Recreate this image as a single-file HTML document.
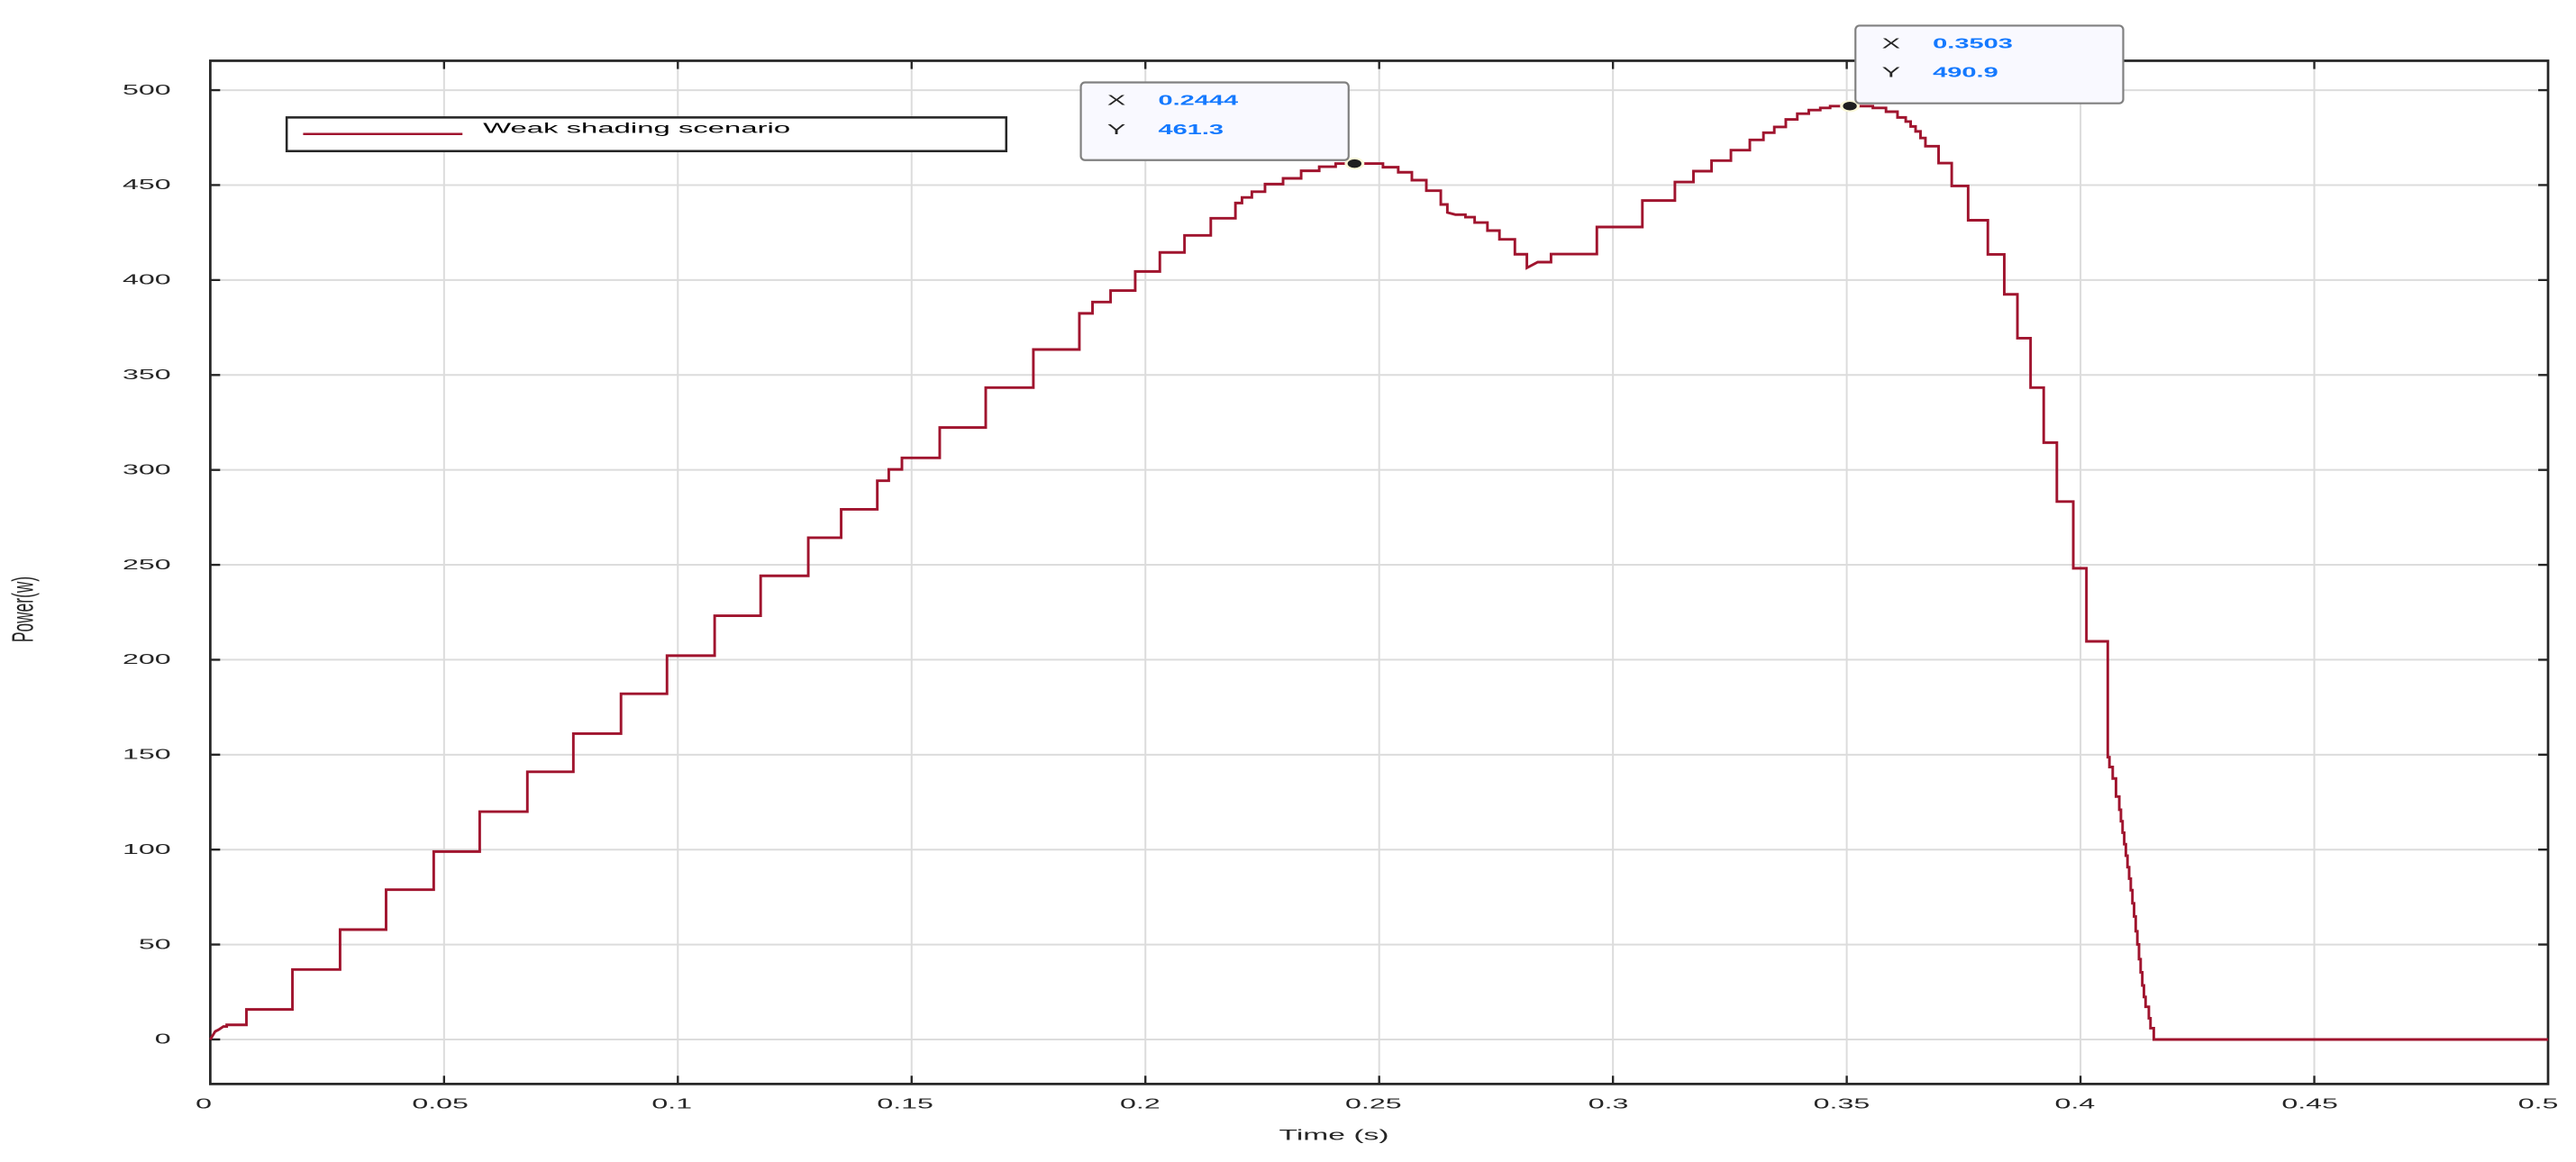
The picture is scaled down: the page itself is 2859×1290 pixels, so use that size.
<!DOCTYPE html>
<html><head><meta charset="utf-8"><style>
html,body{margin:0;padding:0;background:#fff;}
svg{display:block;}
text{font-family:"Liberation Sans",Arial,sans-serif;}
</style></head><body>
<svg width="2859" height="1290" viewBox="0 0 1568 707.5" preserveAspectRatio="none" xmlns="http://www.w3.org/2000/svg">
<rect width="1568" height="707.5" fill="#fff"/>
<g stroke="#dcdcdc" stroke-width="1.1">
<line x1="270.3" y1="37" x2="270.3" y2="660"/><line x1="412.6" y1="37" x2="412.6" y2="660"/><line x1="554.9" y1="37" x2="554.9" y2="660"/><line x1="697.2" y1="37" x2="697.2" y2="660"/><line x1="839.5" y1="37" x2="839.5" y2="660"/><line x1="981.8" y1="37" x2="981.8" y2="660"/><line x1="1124.1" y1="37" x2="1124.1" y2="660"/><line x1="1266.4" y1="37" x2="1266.4" y2="660"/><line x1="1408.7" y1="37" x2="1408.7" y2="660"/>
<line x1="128" y1="632.9" x2="1551" y2="632.9"/><line x1="128" y1="575.1" x2="1551" y2="575.1"/><line x1="128" y1="517.3" x2="1551" y2="517.3"/><line x1="128" y1="459.5" x2="1551" y2="459.5"/><line x1="128" y1="401.7" x2="1551" y2="401.7"/><line x1="128" y1="343.9" x2="1551" y2="343.9"/><line x1="128" y1="286.1" x2="1551" y2="286.1"/><line x1="128" y1="228.3" x2="1551" y2="228.3"/><line x1="128" y1="170.5" x2="1551" y2="170.5"/><line x1="128" y1="112.7" x2="1551" y2="112.7"/><line x1="128" y1="54.9" x2="1551" y2="54.9"/>
</g>
<g stroke="#262626" stroke-width="1.3">
<path d="M270.3 660v-5M412.6 660v-5M554.9 660v-5M697.2 660v-5M839.5 660v-5M981.8 660v-5M1124.1 660v-5M1266.4 660v-5M1408.7 660v-5M270.3 37v5M412.6 37v5M554.9 37v5M697.2 37v5M839.5 37v5M981.8 37v5M1124.1 37v5M1266.4 37v5M1408.7 37v5"/>
<path d="M128 632.9h6M128 575.1h6M128 517.3h6M128 459.5h6M128 401.7h6M128 343.9h6M128 286.1h6M128 228.3h6M128 170.5h6M128 112.7h6M128 54.9h6M1551 632.9h-6M1551 575.1h-6M1551 517.3h-6M1551 459.5h-6M1551 401.7h-6M1551 343.9h-6M1551 286.1h-6M1551 228.3h-6M1551 170.5h-6M1551 112.7h-6M1551 54.9h-6"/>
</g>
<rect x="128" y="37" width="1423" height="623" fill="none" stroke="#262626" stroke-width="1.5"/>
<g font-size="8.6" fill="#262626" text-anchor="end">
<text transform="translate(104,635.5) scale(2.05,1)">0</text>
<text transform="translate(104,577.7) scale(2.05,1)">50</text>
<text transform="translate(104,519.9) scale(2.05,1)">100</text>
<text transform="translate(104,462.1) scale(2.05,1)">150</text>
<text transform="translate(104,404.3) scale(2.05,1)">200</text>
<text transform="translate(104,346.5) scale(2.05,1)">250</text>
<text transform="translate(104,288.7) scale(2.05,1)">300</text>
<text transform="translate(104,230.9) scale(2.05,1)">350</text>
<text transform="translate(104,173.1) scale(2.05,1)">400</text>
<text transform="translate(104,115.3) scale(2.05,1)">450</text>
<text transform="translate(104,57.5) scale(2.05,1)">500</text>
</g>
<g font-size="8.6" fill="#262626" text-anchor="middle">
<text transform="translate(124,675) scale(2.05,1)">0</text>
<text transform="translate(268,675) scale(2.05,1)">0.05</text>
<text transform="translate(409,675) scale(2.05,1)">0.1</text>
<text transform="translate(551,675) scale(2.05,1)">0.15</text>
<text transform="translate(694,675) scale(2.05,1)">0.2</text>
<text transform="translate(836,675) scale(2.05,1)">0.25</text>
<text transform="translate(979,675) scale(2.05,1)">0.3</text>
<text transform="translate(1121,675) scale(2.05,1)">0.35</text>
<text transform="translate(1263,675) scale(2.05,1)">0.4</text>
<text transform="translate(1406,675) scale(2.05,1)">0.45</text>
<text transform="translate(1545,675) scale(2.05,1)">0.5</text>
<text transform="translate(812,694) scale(2.05,1)" font-size="9">Time (s)</text>
</g>
<text transform="translate(20,371) rotate(-90) scale(1,1.9)" font-size="9.5" fill="#262626" text-anchor="middle">Power(w)</text>
<rect x="174.5" y="71.5" width="438" height="20.5" fill="#fff" stroke="#262626" stroke-width="1.4"/>
<line x1="184.5" y1="81.6" x2="281.5" y2="81.6" stroke="#a0142e" stroke-width="1.4"/>
<text transform="translate(294,81) scale(2.05,1)" font-size="8.8" fill="#000">Weak shading scenario</text>
<path fill="none" stroke="#a0142e" stroke-width="1.6" stroke-linejoin="miter" d="M128 632.9 L131 628 L133 627 L136 625 H138 V624 H150 V614.6 H178 V590.3 H207 V566 H235 V541.7 H264 V518.5 H292 V494.2 H321 V469.9 H349 V446.7 H378 V422.4 H406 V399.2 H435 V374.9 H463 V350.6 H492 V327.4 H512 V310.1 H534 V292.7 H541 V285.8 H549 V278.8 H572 V260.3 H600 V236 H629 V212.8 H657 V190.8 H665 V183.9 H676 V176.9 H691 V165.3 H706 V153.7 H721 V143.3 H737 V132.9 H752 V123.6 H756 V120.2 H762 V116.7 H770 V112.1 H781 V108.6 H792 V104 H803 V101.5 H813 V99.6 H841.8 V101.8 H851.1 V104.9 H859.4 V109.7 H868.2 V116.1 H877 V124.5 H881 V129.4 L885.9 130.7 H892 V132.2 H897.6 V135.5 H905.4 V140.4 H912.7 V145.7 H922.1 V154.8 H929.4 V163.1 L936 159.6 H944.1 V154.7 H972 V138.2 H999.7 V122.1 H1019.5 V110.8 H1030.8 V104.2 H1041.8 V97.8 H1053.6 V91.4 H1065.1 V85.2 H1073.4 V80.8 H1080 V77.3 H1087 V72.7 H1094 V69.2 H1101 V67 H1108 V65.7 H1114 V64.6 H1140 V65.7 H1148 V68 H1155 V71.5 H1160 V74 H1163 V77 H1166 V80 H1169 V84 H1172 V89 H1180 V99.3 H1188 V113.2 H1198 V134.1 H1210 V154.9 H1220 V179.2 H1228 V205.9 H1236 V236 H1244 V269.5 H1252 V305.4 H1262 V346 H1270 V390.5 H1283 V461 H1284 V467 H1286 V474 H1288 V485 H1290 V493 H1291 V500 H1292 V507 H1293 V514 H1294 V521 H1295 V528 H1296 V535 H1297 V542 H1298 V550 H1299 V558 H1300 V567 H1301 V575 H1302 V584 H1303 V592 H1304 V600 H1305 V607 H1306 V613 H1308 V620 H1309 V626 H1311 V632.9 H1551"/>
<ellipse cx="824.5" cy="99.6" rx="6" ry="3.6" fill="#fbf8d8"/>
<ellipse cx="824.5" cy="99.6" rx="4.2" ry="2.6" fill="#1f1f1f"/>
<ellipse cx="1126" cy="64.6" rx="6" ry="3.6" fill="#fbf8d8"/>
<ellipse cx="1126" cy="64.6" rx="4.2" ry="2.6" fill="#1f1f1f"/>
<g>
<rect x="657.9" y="50.2" width="163" height="47.3" rx="2.5" fill="#f9f9ff" stroke="#808080" stroke-width="1.2"/>
<text transform="translate(674,64) scale(2,1)" font-size="8.4" fill="#262626">X</text>
<text transform="translate(674,81.6) scale(2,1)" font-size="8.4" fill="#262626">Y</text>
<text transform="translate(705,64) scale(1.85,1)" font-size="8.6" font-weight="bold" fill="#1479ff">0.2444</text>
<text transform="translate(705,81.6) scale(1.85,1)" font-size="8.6" font-weight="bold" fill="#1479ff">461.3</text>
</g>
<g transform="translate(471.5,-34.6)">
<rect x="657.9" y="50.2" width="163" height="47.3" rx="2.5" fill="#f9f9ff" stroke="#808080" stroke-width="1.2"/>
<text transform="translate(674,64) scale(2,1)" font-size="8.4" fill="#262626">X</text>
<text transform="translate(674,81.6) scale(2,1)" font-size="8.4" fill="#262626">Y</text>
<text transform="translate(705,64) scale(1.85,1)" font-size="8.6" font-weight="bold" fill="#1479ff">0.3503</text>
<text transform="translate(705,81.6) scale(1.85,1)" font-size="8.6" font-weight="bold" fill="#1479ff">490.9</text>
</g>
</svg>
</body></html>
